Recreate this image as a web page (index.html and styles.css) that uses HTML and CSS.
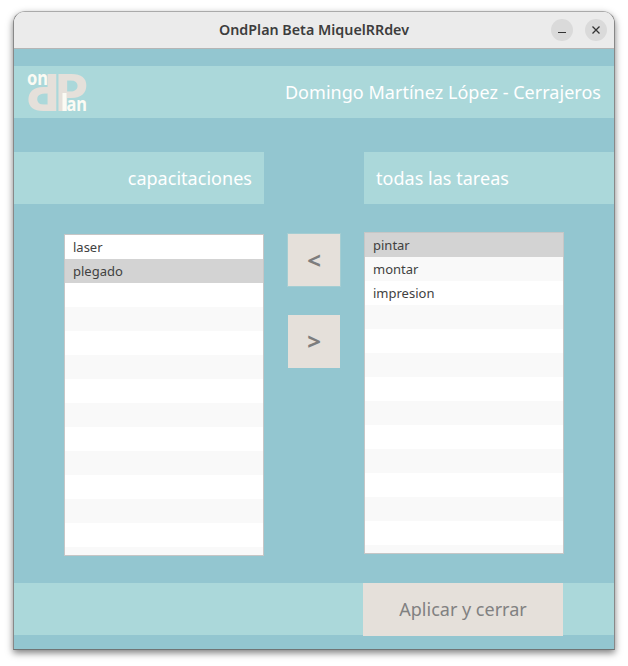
FILE: index.html
```html
<!DOCTYPE html>
<html lang="es">
<head>
<meta charset="utf-8">
<title>OndPlan Beta MiquelRRdev</title>
<link rel="stylesheet" href="styles.css">
</head>
<body>
<div class="window">
  <header class="titlebar">
    <span class="spacer"></span>
    <h1 class="title"><svg width="192" height="24"><text x="1" y="17" textLength="190" lengthAdjust="spacingAndGlyphs">OndPlan Beta MiquelRRdev</text></svg></h1>
    <div class="controls">
      <button class="control" aria-label="Minimizar"><svg width="22" height="22"><path d="M7 13.5h8"/></svg></button>
      <button class="control" aria-label="Cerrar"><svg width="22" height="22"><path d="M7.5 7.5l7 7M14.5 7.5l-7 7" stroke-width="1.3"/></svg></button>
    </div>
  </header>
  <main class="content">
    <div class="band">
      <svg class="logo" width="60" height="40" viewBox="0 0 60 40">
        <g class="mark">
          <text transform="translate(25.7 39) scale(1.08 1)">P</text>
          <text transform="translate(33 2) rotate(180) scale(1.08 1)">P</text>
        </g>
        <g class="word">
          <text x="-1" y="12.5" textLength="21" lengthAdjust="spacingAndGlyphs">on</text>
          <rect x="34.5" y="21" width="4" height="18"/>
          <text x="38.5" y="39" textLength="20.5" lengthAdjust="spacingAndGlyphs">an</text>
        </g>
      </svg>
      <span class="company">Domingo Martínez López - Cerrajeros</span>
    </div>
    <div class="headings">
      <h2 class="heading heading-left">capacitaciones</h2>
      <h2 class="heading">todas las tareas</h2>
    </div>
    <div class="columns">
      <ul class="list list-left"><li>laser</li><li class="selected">plegado</li></ul>
      <div class="movers">
        <button class="mover mover-add">&lt;</button>
        <button class="mover mover-remove">&gt;</button>
      </div>
      <ul class="list"><li class="selected">pintar</li><li>montar</li><li>impresion</li></ul>
    </div>
    <footer class="footer"><button class="apply">Aplicar y cerrar</button></footer>
  </main>
</div>
</body>
</html>
```
FILE: styles.css
```css
* { box-sizing: border-box; }
body {
  margin: 0;
  height: 666px;
  padding: 11px 13px;
  overflow: hidden;
  background: #fff;
  font-family: "Noto Sans", sans-serif;
}
button { border: 0; padding: 0; font-family: inherit; }
.window {
  width: 602px;
  height: 639px;
  border: 1px solid #888;
  border-top-color: #aaa;
  border-bottom-color: #707475;
  border-radius: 12px 12px 0 0;
  overflow: hidden;
  box-shadow: 0 3px 7px rgba(0, 0, 0, .5);
}
.titlebar {
  height: 37px;
  display: grid;
  grid-template-columns: 1fr auto 1fr;
  align-items: center;
  background: #ebebeb;
  border-bottom: 1px solid #b5b5b5;
}
.title { margin: 0; height: 24px; font-size: 15px; }
.title svg { display: block; overflow: visible; }
.title text { font: 600 14.5px "Noto Sans", sans-serif; fill: #3d3d3d; }
.controls { display: flex; justify-content: flex-end; gap: 12px; padding-right: 7px; }
.control { width: 22px; height: 22px; border-radius: 50%; background: #dadada; }
.control svg { display: block; fill: none; stroke: #333; stroke-width: 1; }
.content { height: 600px; padding-top: 17px; background: #93c6d0; }
.band {
  height: 52px;
  display: flex;
  justify-content: space-between;
  align-items: center;
  padding: 0 13px 0 14px;
  background: #abd8da;
}
.logo { overflow: visible; }
.mark text { font: 700 52px "Noto Sans", sans-serif; fill: #e5e0da; }
.word { fill: #fbfbf4; }
.word text { font: 700 19px "Noto Sans", sans-serif; }
.company { font-size: 18px; letter-spacing: .03px; color: #fff; }
.headings { display: flex; justify-content: space-between; margin-top: 34px; }
.heading {
  width: 250px;
  height: 52px;
  margin: 0;
  padding: 0 12px;
  font-size: 18px;
  font-weight: 400;
  line-height: 52px;
  letter-spacing: .03px;
  color: #fff;
  background: #abd8da;
}
.heading-left { text-align: right; }
.columns { display: flex; gap: 24px; padding: 28px 50px 0; }
.list {
  width: 200px;
  height: 322px;
  margin: 0;
  padding: 0;
  overflow: hidden;
  list-style: none;
  border: 1px solid #c6c6c6;
  background: repeating-linear-gradient(#fff 0 24px, #f9f9f9 24px 48px);
  font-size: 13px;
  line-height: 24px;
  color: #414141;
}
.list-left { margin-top: 2px; }
.list li { height: 24px; padding-left: 8px; }
.list .selected { background: #d3d3d3; }
.movers { display: flex; flex-direction: column; gap: 29px; padding-top: 2px; }
.mover { width: 52px; height: 52px; background: #e5e0da; color: #7d7d7d; font-size: 24px; font-weight: 700; line-height: 52px; }
.mover-add { box-shadow: 0 0 0 1px #a4cdd2; }
.mover-remove { height: 53px; padding-bottom: 2px; }
.footer { height: 52px; margin-top: 27px; padding-left: 349px; background: #abd8da; }
.apply { display: block; width: 200px; height: 53px; padding-bottom: 2px; background: #e5e0da; color: #818181; font-size: 18px; }
```
